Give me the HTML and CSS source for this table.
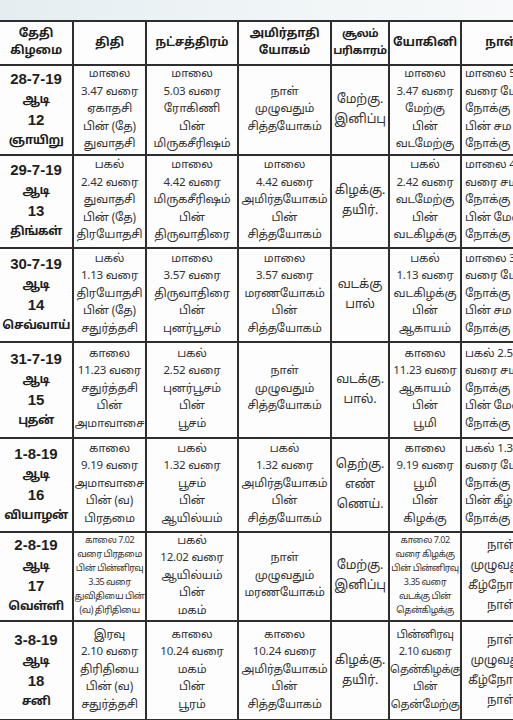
FILE: index.html
```html
<!DOCTYPE html>
<html lang="ta">
<head>
<meta charset="utf-8">
<title>பஞ்சாங்கம்</title>
<link rel="stylesheet" href="styles.css">
</head>
<body>
<div class="page">
  <div class="topband"></div>
  <table class="cal">
    <colgroup>
      <col class="c1"><col class="c2"><col class="c3"><col class="c4"><col class="c5"><col class="c6"><col class="c7">
    </colgroup>
    <thead>
      <tr class="hd">
        <th>தேதி<br>கிழமை</th>
        <th>திதி</th>
        <th>நட்சத்திரம்</th>
        <th>அமிர்தாதி<br>யோகம்</th>
        <th class="tight">சூலம்<br>பரிகாரம்</th>
        <th>யோகினி</th>
        <th>நாள்</th>
      </tr>
    </thead>
    <tbody>
      <tr class="r1">
        <td class="date">28-7-19<br><span class="m">ஆடி</span><br>12<br><span class="d">ஞாயிறு</span></td>
        <td>மாலை<br>3.47 வரை<br>ஏகாதசி<br>பின் (தே)<br>துவாதசி</td>
        <td>மாலை<br>5.03 வரை<br>ரோகிணி<br>பின்<br>மிருகசீரிஷம்</td>
        <td>நாள்<br>முழுவதும்<br>சித்தயோகம்</td>
        <td class="sl">மேற்கு.<br>இனிப்பு</td>
        <td>மாலை<br>3.47 வரை<br>மேற்கு<br>பின்<br>வடமேற்கு</td>
        <td class="nk">மாலை 5.03<br>வரை மேல்<br>நோக்கு நாள்<br>பின் சம<br>நோக்கு நாள்</td>
      </tr>
      <tr class="r2">
        <td class="date">29-7-19<br><span class="m">ஆடி</span><br>13<br><span class="d">திங்கள்</span></td>
        <td>பகல்<br>2.42 வரை<br>துவாதசி<br>பின் (தே)<br>திரயோதசி</td>
        <td>மாலை<br>4.42 வரை<br>மிருகசீரிஷம்<br>பின்<br>திருவாதிரை</td>
        <td>மாலை<br>4.42 வரை<br>அமிர்தயோகம்<br>பின்<br>சித்தயோகம்</td>
        <td class="sl">கிழக்கு.<br>தயிர்.</td>
        <td>பகல்<br>2.42 வரை<br>வடமேற்கு<br>பின்<br>வடகிழக்கு</td>
        <td class="nk">மாலை 4.42<br>வரை சம<br>நோக்கு நாள்<br>பின் மேல்<br>நோக்கு நாள்</td>
      </tr>
      <tr class="r3">
        <td class="date">30-7-19<br><span class="m">ஆடி</span><br>14<br><span class="d">செவ்வாய்</span></td>
        <td>பகல்<br>1.13 வரை<br>திரயோதசி<br>பின் (தே)<br>சதுர்த்தசி</td>
        <td>மாலை<br>3.57 வரை<br>திருவாதிரை<br>பின்<br>புனர்பூசம்</td>
        <td>மாலை<br>3.57 வரை<br>மரணயோகம்<br>பின்<br>சித்தயோகம்</td>
        <td class="sl">வடக்கு<br>பால்</td>
        <td>பகல்<br>1.13 வரை<br>வடகிழக்கு<br>பின்<br>ஆகாயம்</td>
        <td class="nk">மாலை 3.57<br>வரை மேல்<br>நோக்கு நாள்<br>பின் சம<br>நோக்கு நாள்</td>
      </tr>
      <tr class="r4">
        <td class="date">31-7-19<br><span class="m">ஆடி</span><br>15<br><span class="d">புதன்</span></td>
        <td>காலை<br>11.23 வரை<br>சதுர்த்தசி<br>பின்<br>அமாவாசை</td>
        <td>பகல்<br>2.52 வரை<br>புனர்பூசம்<br>பின்<br>பூசம்</td>
        <td>நாள்<br>முழுவதும்<br>சித்தயோகம்</td>
        <td class="sl">வடக்கு.<br>பால்.</td>
        <td>காலை<br>11.23 வரை<br>ஆகாயம்<br>பின்<br>பூமி</td>
        <td class="nk">பகல் 2.52<br>வரை சம<br>நோக்கு நாள்<br>பின் மேல்<br>நோக்கு நாள்</td>
      </tr>
      <tr class="r5">
        <td class="date">1-8-19<br><span class="m">ஆடி</span><br>16<br><span class="d">வியாழன்</span></td>
        <td>காலை<br>9.19 வரை<br>அமாவாசை<br>பின் (வ)<br>பிரதமை</td>
        <td>பகல்<br>1.32 வரை<br>பூசம்<br>பின்<br>ஆயில்யம்</td>
        <td>பகல்<br>1.32 வரை<br>அமிர்தயோகம்<br>பின்<br>சித்தயோகம்</td>
        <td class="sl">தெற்கு.<br>எண்<br>ணெய்.</td>
        <td>காலை<br>9.19 வரை<br>பூமி<br>பின்<br>கிழக்கு</td>
        <td class="nk">பகல் 1.32<br>வரை மேல்<br>நோக்கு நாள்<br>பின் கீழ்<br>நோக்கு நாள்</td>
      </tr>
      <tr class="r6">
        <td class="date">2-8-19<br><span class="m">ஆடி</span><br>17<br><span class="d">வெள்ளி</span></td>
        <td class="small">காலை 7.02<br>வரை பிரதமை<br>பின் பின்னிரவு<br>3.35 வரை<br>துவிதியை பின்<br>(வ) திரிதியை</td>
        <td>பகல்<br>12.02 வரை<br>ஆயில்யம்<br>பின்<br>மகம்</td>
        <td>நாள்<br>முழுவதும்<br>மரணயோகம்</td>
        <td class="sl">மேற்கு.<br>இனிப்பு</td>
        <td class="small">காலை 7.02<br>வரை கிழக்கு<br>பின் பின்னிரவு<br>3.35 வரை<br>வடக்கு பின்<br>தென்கிழக்கு</td>
        <td class="nk2">நாள்<br>முழுவதும்<br>கீழ்நோக்கு<br>நாள்</td>
      </tr>
      <tr class="r7">
        <td class="date">3-8-19<br><span class="m">ஆடி</span><br>18<br><span class="d">சனி</span></td>
        <td>இரவு<br>2.10 வரை<br>திரிதியை<br>பின் (வ)<br>சதுர்த்தசி</td>
        <td>காலை<br>10.24 வரை<br>மகம்<br>பின்<br>பூரம்</td>
        <td>காலை<br>10.24 வரை<br>அமிர்தயோகம்<br>பின்<br>சித்தயோகம்</td>
        <td class="sl">கிழக்கு.<br>தயிர்.</td>
        <td class="tight">பின்னிரவு<br>2.10 வரை<br>தென்கிழக்கு<br>பின்<br>தென்மேற்கு</td>
        <td class="nk2">நாள்<br>முழுவதும்<br>கீழ்நோக்கு<br>நாள்</td>
      </tr>
    </tbody>
  </table>
  <div class="bottomband"></div>
</div>
</body>
</html>
```

FILE: styles.css
```css
html, body {
  margin: 0;
  padding: 0;
  background: #ffffff;
}

.page {
  width: 513px;
  height: 720px;
  overflow: hidden;
  position: relative;
  background: #fdfdfd;
  font-family: "Noto Sans Tamil", "Lohit Tamil", "Noto Sans", "DejaVu Sans", sans-serif;
  color: #2b2b2b;
}

.topband {
  height: 20px;
  background: linear-gradient(90deg, #e4edf1 0%, #eef4f6 45%, #f7f9fa 100%);
}

.bottomband {
  height: 6px;
  background: #e6ebeb;
}

.cal {
  border-collapse: collapse;
  table-layout: fixed;
  width: 543px;
  margin-left: -2px;
}

.c1 { width: 74px; }
.c2 { width: 73px; }
.c3 { width: 92px; }
.c4 { width: 93px; }
.c5 { width: 58px; }
.c6 { width: 72px; }
.c7 { width: 81px; }

.cal th,
.cal td {
  border: 2px solid #2e2e2e;
  text-align: center;
  vertical-align: middle;
  padding: 0;
  white-space: nowrap;
  overflow: hidden;
}

.cal th {
  font-size: 12px;
  line-height: 17px;
  font-weight: 700;
  color: #1e1e1e;
  letter-spacing: -0.2px;
}

.cal th.tight {
  font-size: 11px;
  letter-spacing: -0.5px;
}

.hd { height: 44px; }

.cal td {
  font-size: 11.5px;
  line-height: 17.5px;
  color: #333333;
  letter-spacing: -0.2px;
}

.cal td.date {
  font-family: "Liberation Sans", "Noto Sans Tamil", "Noto Sans", sans-serif;
  font-size: 15px;
  font-weight: 700;
  line-height: 19px;
  color: #1f1f1f;
  letter-spacing: 0;
}

.date .m,
.date .d {
  font-family: "Noto Sans Tamil", "Lohit Tamil", "Noto Sans", sans-serif;
  font-size: 12px;
  letter-spacing: -0.5px;
}

.cal td.sl {
  font-size: 12.5px;
  line-height: 20px;
}

.cal td.nk {
  text-align: left;
  padding-left: 3px;
}

.cal td.nk2 {
  font-size: 12px;
  line-height: 20px;
}

.cal td.small {
  font-size: 9px;
  line-height: 14px;
  letter-spacing: -0.5px;
}

.cal td.tight {
  font-size: 11px;
  letter-spacing: -0.5px;
}

.r1 { height: 86px; }
.r2 { height: 93px; }
.r3 { height: 94px; }
.r4 { height: 96px; }
.r5 { height: 94px; }
.r6 { height: 89px; }
.r7 { height: 99px; }
```
